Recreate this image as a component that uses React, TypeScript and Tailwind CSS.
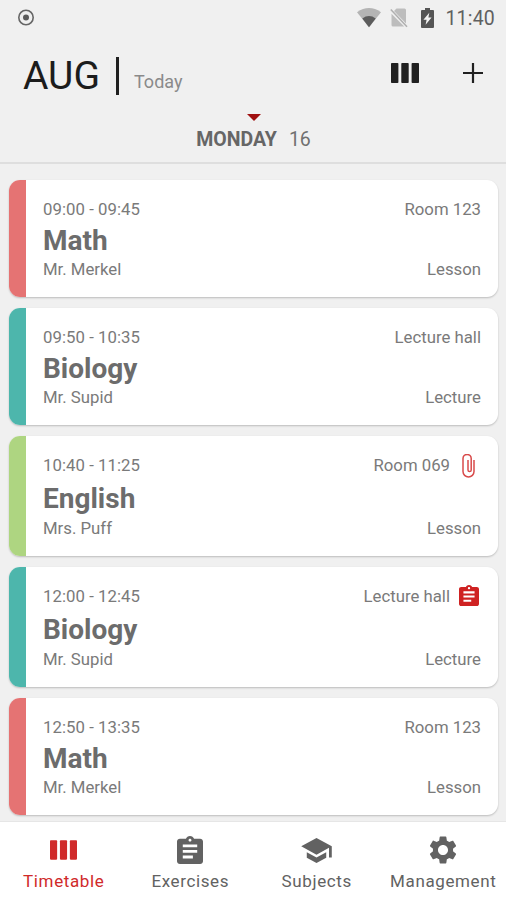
import * as React from "react";

type Badge = "attachment" | "exercise";

type Lesson = {
  time: string;
  subject: string;
  teacher: string;
  room: string;
  kind: string;
  color: string;
  badge?: Badge;
};

const lessons: Lesson[] = [
  { time: "09:00 - 09:45", subject: "Math", teacher: "Mr. Merkel", room: "Room 123", kind: "Lesson", color: "bg-[#e57373]" },
  { time: "09:50 - 10:35", subject: "Biology", teacher: "Mr. Supid", room: "Lecture hall", kind: "Lecture", color: "bg-[#4db6ac]" },
  { time: "10:40 - 11:25", subject: "English", teacher: "Mrs. Puff", room: "Room 069", kind: "Lesson", color: "bg-[#aed581]", badge: "attachment" },
  { time: "12:00 - 12:45", subject: "Biology", teacher: "Mr. Supid", room: "Lecture hall", kind: "Lecture", color: "bg-[#4db6ac]", badge: "exercise" },
  { time: "12:50 - 13:35", subject: "Math", teacher: "Mr. Merkel", room: "Room 123", kind: "Lesson", color: "bg-[#e57373]" },
];

export default function App() {
  return (
    <div className="flex h-[900px] w-[506px] flex-col overflow-hidden bg-[#f0f0f0] font-['Roboto',sans-serif] text-[#7a7a7a]">
      <StatusBar />
      <Header />
      <main className="flex flex-1 flex-col gap-[11px] pt-4 pr-2 pl-[9px]">
        {lessons.map((lesson) => (
          <LessonCard key={lesson.time} lesson={lesson} />
        ))}
      </main>
      <BottomNav />
    </div>
  );
}

function StatusBar() {
  return (
    <div className="flex h-9 shrink-0 items-center pr-[11px] pl-[17px]">
      <svg viewBox="0 0 18 18" className="h-[18px] w-[18px]" aria-hidden="true">
        <circle cx="9" cy="8.5" r="7.2" fill="none" stroke="#666" strokeWidth="1.6" />
        <circle cx="9" cy="8.5" r="3" fill="#5c5c5c" />
      </svg>
      <div className="ml-auto flex items-center">
        {/* wifi */}
        <svg viewBox="0 0 24 20" className="h-5 w-6" aria-hidden="true">
          <path d="M0 4.200Q12-4.200 24 4.200L12 19.200Z" fill="#b4b4b4" />
          <path d="M5.300 10.500Q12 5.600 18.700 10.500L12 19.200Z" fill="#5c5c5c" />
        </svg>
        {/* no sim */}
        <svg viewBox="0 0 18 20" className="ml-[9px] h-5 w-[18px]" aria-hidden="true">
          <path d="M6.500.5H14.500Q16 .5 16 2V15.500L4 3ZM1.500 5.800L14.200 18.500H3Q1.500 18.500 1.500 17Z" fill="#bdbdbd" />
          <path d="M.8 1.600L17 18.800" stroke="#b0b0b0" strokeWidth="1.500" />
        </svg>
        {/* battery */}
        <svg viewBox="0 0 13 20" className="ml-[13px] h-5 w-[13px]" aria-hidden="true">
          <path d="M4 0h5v2h3q1 0 1 1v16q0 1-1 1H1q-1 0-1-1V3q0-1 1-1h3Z" fill="#555" />
          <path d="M8.300 4.800L2.400 11.800h3.200l-1 4.900 6-7.200H7.400Z" fill="#f4f4f4" />
        </svg>
        <span className="mt-0.5 ml-[11px] text-[19.5px] leading-5 tracking-[0.2px] text-[#606060]">11:40</span>
      </div>
    </div>
  );
}

function Header() {
  return (
    <header className="shrink-0 border-b-2 border-[#dedede]">
      <div className="flex h-[77px] items-start pr-[23px] pl-[23px]">
        <h1 className="mt-[15px] w-[78px] text-[39px] leading-[50px] text-[#1c1c1c]">AUG</h1>
        <div className="mt-[21px] ml-[15px] h-[38px] w-[3px] bg-[#202020]" />
        <span className="mt-[34px] ml-[15px] text-[18px] leading-6 text-[#8a8a8a]">Today</span>
        <div className="mt-[27px] ml-auto flex items-center gap-[44px]">
          <Columns className="h-5 w-7 text-[#202020]" />
          <svg viewBox="0 0 20 20" className="h-5 w-5" aria-label="Add">
            <path d="M10 0v20M0 10h20" stroke="#202020" strokeWidth="2.200" />
          </svg>
        </div>
      </div>
      <div className="flex h-[49px] flex-col items-center pl-px">
        <svg viewBox="0 0 14 7" className="mt-[1px] h-[7px] w-[14px]" aria-hidden="true">
          <path d="M0 0h14L7 7Z" fill="#a01010" />
        </svg>
        <div className="mt-[7px] flex gap-3 text-[19.5px] leading-6 text-[#707070]">
          <span className="font-bold text-[#666]">MONDAY</span>
          <span>16</span>
        </div>
      </div>
    </header>
  );
}

function LessonCard({ lesson }: { lesson: Lesson }) {
  const { badge } = lesson;
  return (
    <article
      className={`flex shrink-0 overflow-hidden rounded-[11px] bg-white shadow-[0_1px_2px_rgba(0,0,0,0.22)] ${
        badge ? "h-[120px]" : "h-[117px]"
      }`}
    >
      <div className={`w-[17px] ${lesson.color}`} />
      <div className="flex-1 pt-5 pr-[17px] pl-[17px] text-[16.75px]">
        <div className={`flex h-5 items-center justify-between ${badge ? "mb-[3px]" : ""}`}>
          <span className="tracking-[0.05px]">{lesson.time}</span>
          <span className="flex items-center">
            {lesson.room}
            {badge === "attachment" && <Paperclip />}
            {badge === "exercise" && <Clipboard className="mr-[2px] mb-[3px] ml-[9px] h-[21px] w-5 text-[#cf2222]" />}
          </span>
        </div>
        <h2 className={`text-[28px] leading-[42px] font-bold text-[#6c6c6c] ${badge ? "-mt-px mb-px" : ""}`}>
          {lesson.subject}
        </h2>
        <div className="flex h-4 items-center justify-between">
          <span>{lesson.teacher}</span>
          <span>{lesson.kind}</span>
        </div>
      </div>
    </article>
  );
}

function BottomNav() {
  return (
    <nav className="grid h-[79px] shrink-0 grid-cols-4 border-t border-[#e6e6e6] bg-white text-[17px] leading-5 tracking-[0.62px] text-[#626262]">
      <NavItem label="Timetable" active>
        <Columns className="h-5 w-[27px]" />
      </NavItem>
      <NavItem label="Exercises">
        <Clipboard className="h-7 w-[26px]" />
      </NavItem>
      <NavItem label="Subjects">
        <svg viewBox="1 3 22 18" className="h-[25px] w-[31px]" fill="currentColor" aria-hidden="true">
          <path d="M5 13.180v4L12 21l7-3.820v-4L12 17l-7-3.820zM12 3L1 9l11 6 9-4.910V17h2V9L12 3z" />
        </svg>
      </NavItem>
      <NavItem label="Management">
        <Gear />
      </NavItem>
    </nav>
  );
}

function NavItem({ label, active, children }: { label: string; active?: boolean; children: React.ReactNode }) {
  return (
    <div className={`flex flex-col items-center pt-[13px] ${active ? "text-[#d02a2a]" : ""}`}>
      <div className="flex h-[30px] items-center">{children}</div>
      <span className="mt-[6px] pl-px">{label}</span>
    </div>
  );
}

function Columns({ className = "" }: { className?: string }) {
  return (
    <svg viewBox="0 0 28 20" className={className} fill="currentColor" aria-hidden="true">
      <rect x="0" y="0" width="7.400" height="20" rx=".8" />
      <rect x="10.300" y="0" width="7.400" height="20" rx=".8" />
      <rect x="20.600" y="0" width="7.400" height="20" rx=".8" />
    </svg>
  );
}

function Clipboard({ className = "" }: { className?: string }) {
  return (
    <svg viewBox="3 1 18 20" className={className} fill="currentColor" preserveAspectRatio="none" aria-hidden="true">
      <path d="M19 3h-4.180C14.400 1.840 13.300 1 12 1c-1.300 0-2.400.84-2.820 2H5c-1.100 0-2 .9-2 2v14c0 1.100.9 2 2 2h14c1.100 0 2-.9 2-2V5c0-1.100-.9-2-2-2zm-7 0c.55 0 1 .45 1 1s-.45 1-1 1-1-.45-1-1 .45-1 1-1zm2 14H7v-2h7v2zm3-4H7v-2h10v2zm0-4H7V7h10v2z" />
    </svg>
  );
}

function Paperclip() {
  return (
    <svg viewBox="0 0 13 24" className="mr-[6px] ml-3 h-6 w-[13px]" fill="none" aria-hidden="true">
      <path
        d="M9.200 6V16a1.600 1.600 0 0 1-3.200 0V6M9.200 7V4.500a4.100 4.100 0 0 0-8.200 0V17.500a5.500 5.500 0 0 0 11 0V6"
        stroke="#d84a4a"
        strokeWidth="1.500"
      />
    </svg>
  );
}

function Gear() {
  return (
    <svg viewBox="2 2 20 20" className="h-7 w-7" fill="currentColor" aria-hidden="true">
      <path d="M19.140 12.940c.04-.3.060-.61.060-.94 0-.32-.02-.64-.07-.94l2.030-1.580c.18-.14.230-.41.120-.61l-1.920-3.320c-.12-.22-.37-.29-.59-.22l-2.390.96c-.5-.38-1.030-.7-1.620-.94l-.36-2.540c-.04-.24-.24-.41-.48-.41h-3.840c-.24 0-.43.170-.47.410l-.36 2.540c-.59.240-1.130.570-1.620.940l-2.390-.96c-.22-.08-.47 0-.59.220L2.740 8.870c-.12.210-.08.470.120.610l2.030 1.580c-.05.300-.09.630-.09.940s.02.640.070.940l-2.030 1.580c-.18.140-.23.410-.12.610l1.920 3.320c.12.220.370.290.590.220l2.390-.96c.5.380 1.030.7 1.620.940l.36 2.540c.05.240.240.410.480.410h3.840c.24 0 .44-.17.470-.41l.36-2.540c.59-.24 1.130-.56 1.620-.94l2.390.96c.22.080.470 0 .59-.22l1.920-3.320c.12-.22.070-.47-.12-.61l-2.010-1.580zM12 15.600c-1.980 0-3.600-1.620-3.600-3.600s1.620-3.600 3.600-3.600 3.600 1.620 3.600 3.600-1.620 3.600-3.600 3.600z" />
    </svg>
  );
}
